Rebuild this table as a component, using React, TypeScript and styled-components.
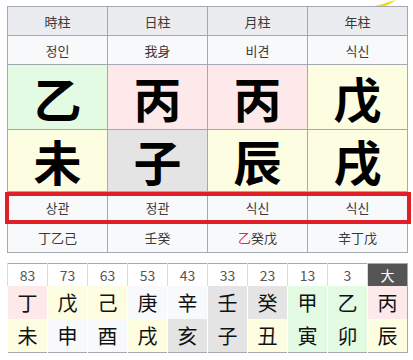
import React from 'react';
import styled, { createGlobalStyle } from 'styled-components';

const GlobalStyle = createGlobalStyle`
  body {
    margin: 0;
    background: #fff;
    font-family: "Noto Sans CJK KR", "Noto Sans", sans-serif;
    color: #222;
  }
`;

const Page = styled.div`
  position: relative;
  width: 413px;
  height: 360px;
  padding: 6px 0 0 7px;
  box-sizing: border-box;
  overflow: hidden;
`;

const Squiggle = styled.svg`
  position: absolute;
  top: 0;
  left: 366px;
`;

const ChartWrap = styled.div`
  position: relative;
  width: 401px;
`;

const PillarTable = styled.table`
  border-collapse: collapse;
  table-layout: fixed;
  width: 401px;
`;

const Cell = styled.td<{ $bg?: string; $h: number }>`
  border: 1px solid #a2a9b1;
  background: ${(p) => p.$bg || '#f8f9fa'};
  height: ${(p) => p.$h}px;
  padding: 0;
  text-align: center;
  vertical-align: middle;
  font-size: 13px;
  color: #3a3a3a;
`;

const BigChar = styled.span`
  font-family: "Noto Sans CJK SC", sans-serif;
  font-weight: 700;
  font-size: 48px;
  line-height: 1;
  color: #000;
`;

const Red = styled.span`
  color: #d33;
`;

const Highlight = styled.div`
  position: absolute;
  left: -2px;
  top: 186px;
  width: 406px;
  height: 32px;
  box-sizing: border-box;
  border: 4px solid #e01f26;
  pointer-events: none;
`;

const LuckTable = styled.table`
  margin-top: 10px;
  border-collapse: collapse;
  table-layout: fixed;
  width: 401px;
  border: 1px solid #a2a9b1;
`;

const NumCell = styled.td<{ $dark?: boolean }>`
  height: 22px;
  padding: 0;
  text-align: center;
  font-size: 14px;
  line-height: 1;
  border-left: 1px solid #dcdcdc;
  background: ${(p) => (p.$dark ? '#555' : '#fff')};
  color: ${(p) => (p.$dark ? '#fff' : '#555')};
`;

const LuckCell = styled.td<{ $bg: string; $h: number }>`
  height: ${(p) => p.$h}px;
  padding: 0;
  text-align: center;
  font-family: "Noto Sans CJK SC", sans-serif;
  font-size: 20px;
  color: #111;
  border-left: 1px solid #fff;
  background: ${(p) => p.$bg};
`;

const G = '#e3fbe3';
const P = '#fde9ea';
const Y = '#fdfde1';
const W = '#f8f9fa';
const D = '#e4e4e4';

const pillars = [
  { title: '時柱', god: '정인', stem: '乙', sBg: G, branch: '未', bBg: Y, god2: '상관', hidden: <>丁乙己</> },
  { title: '日柱', god: '我身', stem: '丙', sBg: P, branch: '子', bBg: D, god2: '정관', hidden: <>壬癸</> },
  { title: '月柱', god: '비견', stem: '丙', sBg: P, branch: '辰', bBg: Y, god2: '식신', hidden: <><Red>乙</Red>癸戊</> },
  { title: '年柱', god: '식신', stem: '戊', sBg: Y, branch: '戌', bBg: Y, god2: '식신', hidden: <>辛丁戊</> },
];

const luck = [
  { age: '83', s: '丁', sBg: P, b: '未', bBg: Y },
  { age: '73', s: '戊', sBg: Y, b: '申', bBg: W },
  { age: '63', s: '己', sBg: Y, b: '酉', bBg: W },
  { age: '53', s: '庚', sBg: W, b: '戌', bBg: Y },
  { age: '43', s: '辛', sBg: W, b: '亥', bBg: D },
  { age: '33', s: '壬', sBg: D, b: '子', bBg: D },
  { age: '23', s: '癸', sBg: D, b: '丑', bBg: Y },
  { age: '13', s: '甲', sBg: G, b: '寅', bBg: G },
  { age: '3', s: '乙', sBg: G, b: '卯', bBg: G },
  { age: '大', s: '丙', sBg: P, b: '辰', bBg: Y, dark: true },
];

const App: React.FC = () => {
  return (
    <Page>
      <GlobalStyle />
      <Squiggle width="34" height="8" viewBox="0 0 34 8">
        <path d="M2 7 C10 6 18 4 26 1 L30 0 L22 5 C16 7 8 8 2 7 Z" fill="#f5d90a" />
      </Squiggle>
      <ChartWrap>
        <PillarTable>
          <tbody>
            <tr>
              {pillars.map((p) => (
                <Cell key={p.title} $h={28} $bg="#eaecf0">{p.title}</Cell>
              ))}
            </tr>
            <tr>
              {pillars.map((p) => (
                <Cell key={p.title} $h={28}>{p.god}</Cell>
              ))}
            </tr>
            <tr>
              {pillars.map((p) => (
                <Cell key={p.title} $h={64} $bg={p.sBg}><BigChar>{p.stem}</BigChar></Cell>
              ))}
            </tr>
            <tr>
              {pillars.map((p) => (
                <Cell key={p.title} $h={61} $bg={p.bBg}><BigChar>{p.branch}</BigChar></Cell>
              ))}
            </tr>
            <tr>
              {pillars.map((p) => (
                <Cell key={p.title} $h={30}>{p.god2}</Cell>
              ))}
            </tr>
            <tr>
              {pillars.map((p) => (
                <Cell key={p.title} $h={29}>{p.hidden}</Cell>
              ))}
            </tr>
          </tbody>
        </PillarTable>
        <Highlight />
      </ChartWrap>
      <LuckTable>
        <tbody>
          <tr>
            {luck.map((l) => (
              <NumCell key={l.age} $dark={l.dark}>{l.age}</NumCell>
            ))}
          </tr>
          <tr>
            {luck.map((l) => (
              <LuckCell key={l.age} $h={33} $bg={l.sBg}>{l.s}</LuckCell>
            ))}
          </tr>
          <tr>
            {luck.map((l) => (
              <LuckCell key={l.age} $h={33} $bg={l.bBg}>{l.b}</LuckCell>
            ))}
          </tr>
        </tbody>
      </LuckTable>
    </Page>
  );
};

export default App;
